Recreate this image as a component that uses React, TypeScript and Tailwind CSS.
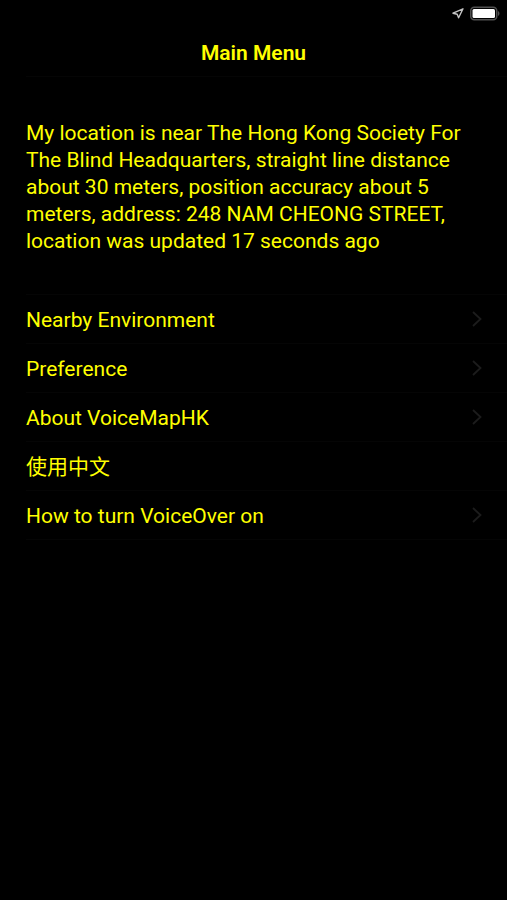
import React from 'react';

const MENU_ITEMS = [
  { id: 'nearby', label: 'Nearby Environment', hasArrow: true },
  { id: 'preference', label: 'Preference', hasArrow: true },
  { id: 'about', label: 'About VoiceMapHK', hasArrow: true },
  { id: 'language', label: '使用中文', hasArrow: false },
  { id: 'voiceover', label: 'How to turn VoiceOver on', hasArrow: true },
];

function StatusBar() {
  return (
    <div className="flex h-7 items-center justify-end gap-1 pr-1.5">
      <svg className="h-3.5 w-3.5" viewBox="0 0 14 14" fill="none" stroke="#c4c4c4" strokeWidth="1.4" strokeLinejoin="round">
        <path d="M12 1.8 L2 6.2 L6.2 7.2 L7.6 10.8 Z" />
      </svg>
      <svg className="h-4 w-8" viewBox="0 0 32 16" fill="none">
        <rect x="1.75" y="1.25" width="26" height="12.5" rx="3.5" stroke="#505050" strokeWidth="1.5" />
        <rect x="3.5" y="3" width="22.5" height="9" rx="1.5" fill="#fff" />
        <path d="M29 5 C31 6 31 9 29 10 Z" fill="#505050" />
      </svg>
    </div>
  );
}

function App() {
  return (
    <div className="min-h-screen bg-black font-[Roboto,'Noto_Sans_CJK_TC',sans-serif] text-[21px] leading-[27px] text-[#ffff00]">
      <StatusBar />
      <header className="ml-[26px] border-b border-[#050505] pr-[26px]">
        <h1 className="flex h-12 items-center justify-center pt-0.5 font-semibold">Main Menu</h1>
      </header>

      <p className="px-[26px] pt-[43px] pb-[39px]">
        My location is near The Hong Kong Society For The Blind Headquarters, straight line distance about 30 meters,
        position accuracy about 5 meters, address: 248 NAM CHEONG STREET, location was updated 17 seconds ago
      </p>

      <nav className="pl-[26px]">
        <ul className="divide-y divide-[#050505] border-y border-[#050505]">
          {MENU_ITEMS.map((item) => (
            <li key={item.id}>
              <button type="button" className="flex h-12 w-full items-center justify-between pr-6 text-left">
                <span className="pt-[3px]">{item.label}</span>
                {item.hasArrow && (
                  <svg className="h-4 w-3" viewBox="0 0 12 16" fill="none" stroke="#1c1c1c" strokeWidth="1.8">
                    <path d="M2 1 L9.5 8 L2 15" />
                  </svg>
                )}
              </button>
            </li>
          ))}
        </ul>
      </nav>
    </div>
  );
}

export default App;
